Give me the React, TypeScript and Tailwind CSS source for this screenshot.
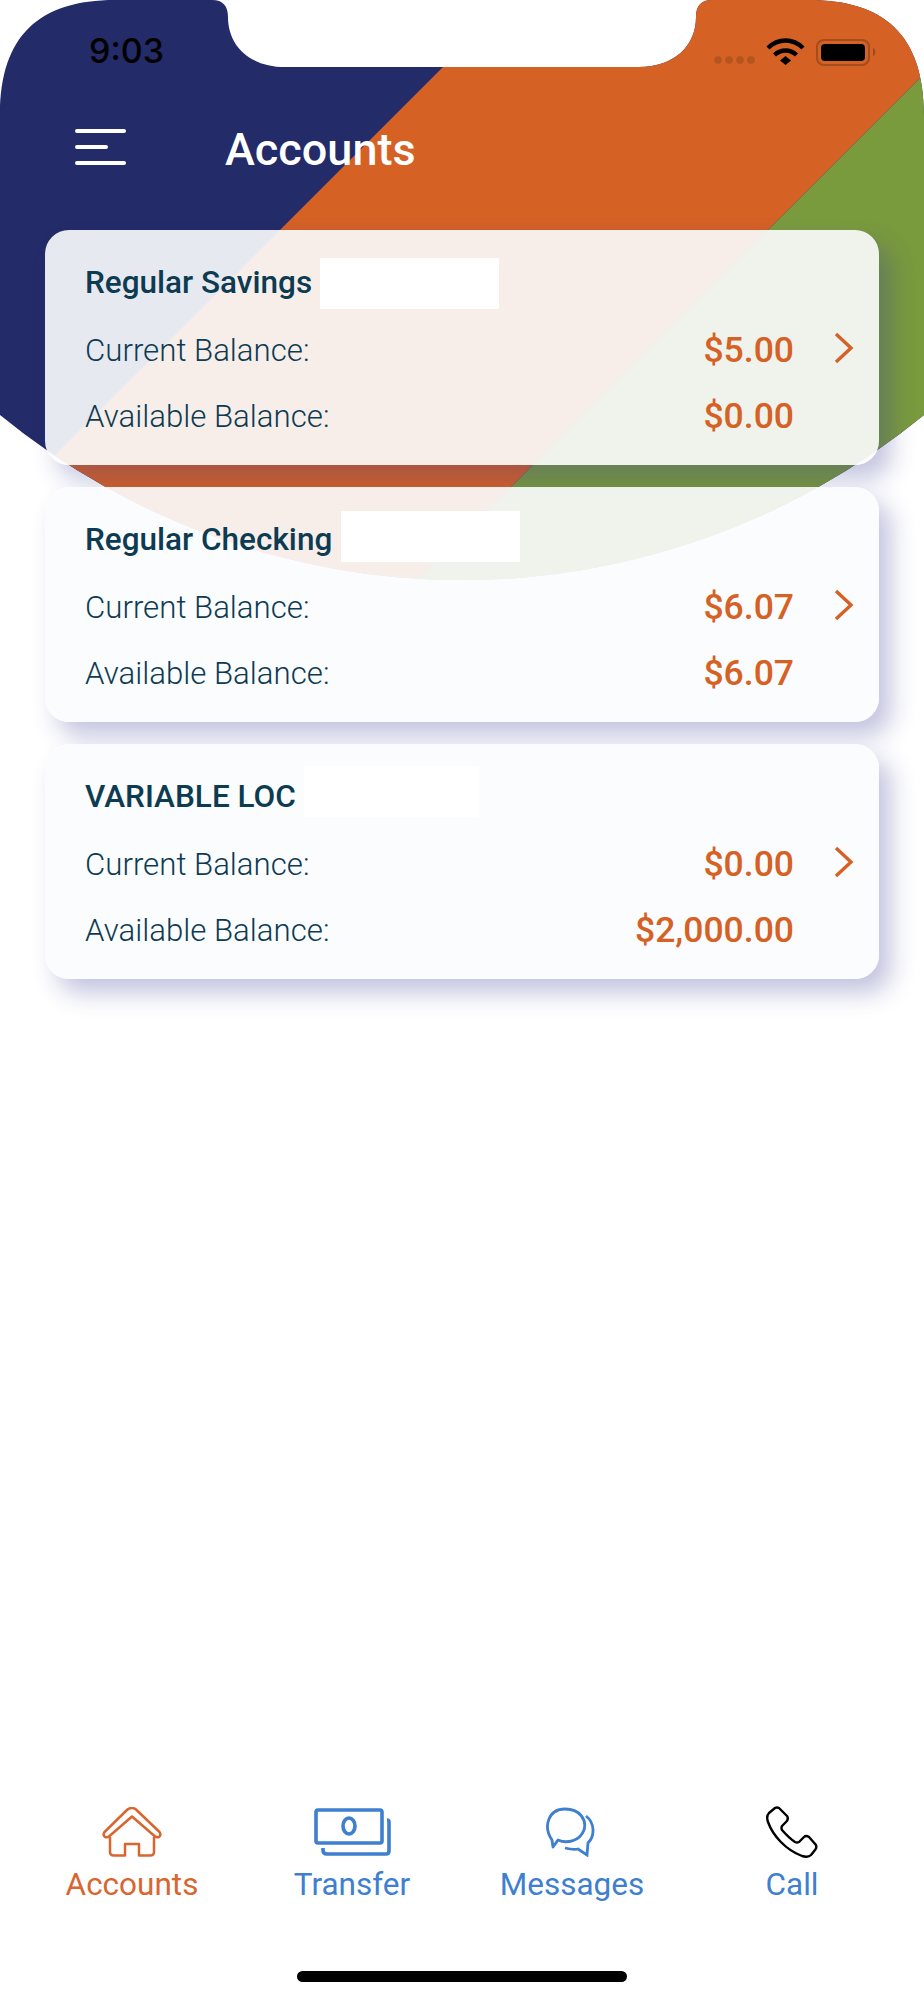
import React from 'react';

const accounts = [
  { name: 'Regular Savings', current: '$5.00', available: '$0.00', redact: 'ml-[8px] w-[179px]' },
  { name: 'Regular Checking', current: '$6.07', available: '$6.07', redact: 'ml-[9px] w-[179px] -translate-y-[4px]' },
  { name: 'VARIABLE LOC', current: '$0.00', available: '$2,000.00', redact: 'ml-[8px] w-[175px] -translate-y-[6px]' },
];

const HeaderArt = () => (
  <svg className="absolute left-0 top-0" width="924" height="600" viewBox="0 0 924 600">
    <defs>
      <clipPath id="header-shape">
        <path d="M0 415 V115 C0 35 40 0 115 0 H212 C223 0 228 6 228 17 C228 46 250 67 285 67 H639 C674 67 696 46 696 17 C696 6 701 0 712 0 H809 C884 0 924 35 924 115 V415 A729 729 0 0 1 0 415 Z" />
      </clipPath>
    </defs>
    <g clipPath="url(#header-shape)">
      <rect width="924" height="600" fill="#232b68" />
      <polygon points="510,0 998,0 398,600 -90,600" fill="#d56125" />
      <polygon points="998,0 924,0 924,600 398,600" fill="#7a9a3e" />
    </g>
  </svg>
);

const StatusIcons = () => (
  <svg width="170" height="32" viewBox="0 0 170 32" className="block">
    <g fill="#b2551f">
      <circle cx="6" cy="25" r="3.8" />
      <circle cx="17" cy="25" r="3.8" />
      <circle cx="28" cy="25" r="3.8" />
      <circle cx="39" cy="25" r="3.8" />
    </g>
    <g fill="none" stroke="#000" strokeWidth="4.4">
      <path d="M56 13 C66 3 81 3 91 13" />
      <path d="M62.5 20 C69 14 78 14 84.5 20" />
    </g>
    <path d="M68 25.5 L73.5 21 L79 25.5 L73.5 30 Z" fill="#000" />
    <rect x="105" y="5" width="52" height="25" rx="7" fill="none" stroke="#a34d1f" strokeWidth="2" />
    <rect x="109" y="9" width="44" height="17" rx="4" fill="#000" />
    <path d="M161 13 C164 14 164 20 161 21 Z" fill="#9a4a1f" />
  </svg>
);

const Chevron = () => (
  <svg width="20" height="32" viewBox="0 0 20 32" className="block">
    <path d="M2 2 L17 16 L2 30" fill="none" stroke="#d56125" strokeWidth="3.4" />
  </svg>
);

const HomeIcon = () => (
  <svg width="60" height="50" viewBox="0 0 60 50" fill="none" stroke="#d9652f" strokeWidth="2.5" strokeLinejoin="round">
    <path d="M25.5 2.5 Q30 -0.5 34 2.5 L57.5 25 Q59.5 28 57 30 Q54.5 31 52.5 29 L30 9.5 L7.5 29 Q5.5 31 3 30 Q0.5 28 2.5 25 Z" />
    <path d="M8 30 V45 Q8 48.5 12 48.5 H23 V37 H37 V48.5 H48 Q52 48.5 52 45 V30" />
  </svg>
);

const TransferIcon = () => (
  <svg width="77" height="48" viewBox="0 0 77 48" fill="none" stroke="#3e7fcf" strokeWidth="3.6" strokeLinejoin="round">
    <rect x="2" y="2" width="66" height="33" rx="2" />
    <ellipse cx="35" cy="18" rx="6" ry="8" />
    <path d="M9 40 V42 Q9 46 13 46 H72 Q75 46 75 43 V14 Q75 12 73 12" />
  </svg>
);

const MessagesIcon = () => (
  <svg width="50" height="50" viewBox="0 0 50 50" fill="none" stroke="#3e7fcf" strokeWidth="2.8" className="-translate-x-[2px]">
    <path d="M7 33 C-2 20 3 2 20 2 C35 2 42 13 39 23 C35 34 22 37 13 33 L8 40 Z" strokeLinejoin="round" />
    <path d="M41 9 C50 16 50 29 43 36 L42 48 L33 42 C29 43 24 42 20 41" />
  </svg>
);

const PhoneIcon = () => (
  <svg width="52" height="52" viewBox="0 0 52 52" fill="none" stroke="#000" strokeWidth="2.4" strokeLinejoin="round">
    <path d="M3 7 L9 2 Q11 1 13 2 L21 10 Q23 13 20 16 L16 20 Q15 22 16 24 Q23 32 29 36 Q31 37 33 36 L38 31 Q40 29 43 31 L50 39 Q51 42 49 44 L45 49 Q42 52 36 50 C20 44 7 30 2 16 Q0 10 3 7 Z" />
  </svg>
);

const tabs = [
  { label: 'Accounts', icon: <HomeIcon />, color: 'text-[#d9652f]' },
  { label: 'Transfer', icon: <TransferIcon />, color: 'text-[#3e7fcf]' },
  { label: 'Messages', icon: <MessagesIcon />, color: 'text-[#3e7fcf]' },
  { label: 'Call', icon: <PhoneIcon />, color: 'text-[#3e7fcf]' },
];

const AccountCard = ({ account }: { account: (typeof accounts)[number] }) => (
  <div className="h-[235px] rounded-[24px] bg-[#fbfcfe]/[0.91] pl-[40px] pr-[25px] pt-[28px] shadow-[12px_14px_24px_rgba(55,60,150,0.3)]">
    <div className="flex h-[51px] items-center">
      <span className="-translate-y-[1px] text-[31.5px] font-medium leading-none text-[#0d3b52]">{account.name}</span>
      <span className={`${account.redact} h-[51px] bg-white`} />
    </div>
    <div className="relative mt-[26px] flex h-[32px] items-center justify-between pr-[60px]">
      <span className="text-[31.2px] font-light leading-none text-[#0d3b52]">Current Balance:</span>
      <span className="text-[35.5px] font-medium leading-none text-[#d56125]">{account.current}</span>
      <div className="absolute right-0 top-[-3px]">
        <Chevron />
      </div>
    </div>
    <div className="mt-[34px] flex h-[32px] items-center justify-between pr-[60px]">
      <span className="text-[31.2px] font-light leading-none text-[#0d3b52]">Available Balance:</span>
      <span className="text-[35.5px] font-medium leading-none text-[#d56125]">{account.available}</span>
    </div>
  </div>
);

const App: React.FC = () => {
  return (
    <div className="relative flex h-[2000px] w-[924px] flex-col overflow-hidden bg-white font-['Roboto',sans-serif]">
      <HeaderArt />

      <div className="relative flex h-[230px] flex-col">
        <div className="flex h-[100px] items-start justify-between pl-[89px] pr-[42px] pt-[32px]">
          <span className="font-['Inter',sans-serif] text-[34px] font-medium leading-[38px] text-black">9:03</span>
          <div className="pt-[3px]">
            <StatusIcons />
          </div>
        </div>
        <div className="flex items-center pl-[75px] pt-[27px]">
          <div className="flex w-[51px] -translate-y-[3px] flex-col gap-[12px]">
            <span className="h-[4px] w-[51px] rounded-full bg-white" />
            <span className="h-[4px] w-[33px] rounded-full bg-white" />
            <span className="h-[4px] w-[51px] rounded-full bg-white" />
          </div>
          <span className="ml-[99px] text-[45px] font-medium leading-none text-white">Accounts</span>
        </div>
      </div>

      <div className="relative flex flex-col gap-[22px] pl-[45px] pr-[45px]">
        {accounts.map((account) => (
          <AccountCard key={account.name} account={account} />
        ))}
      </div>

      <div className="relative mt-auto grid grid-cols-4 px-[22px]">
        {tabs.map((tab) => (
          <div key={tab.label} className="flex flex-col items-center">
            <div className="flex h-[52px] items-center justify-center">{tab.icon}</div>
            <span className={`mt-[9px] text-[31.5px] leading-[36px] ${tab.color}`}>{tab.label}</span>
          </div>
        ))}
      </div>
      <div className="relative mb-[18px] mt-[68px] flex justify-center">
        <span className="h-[11px] w-[330px] rounded-full bg-black" />
      </div>
    </div>
  );
};

export default App;
